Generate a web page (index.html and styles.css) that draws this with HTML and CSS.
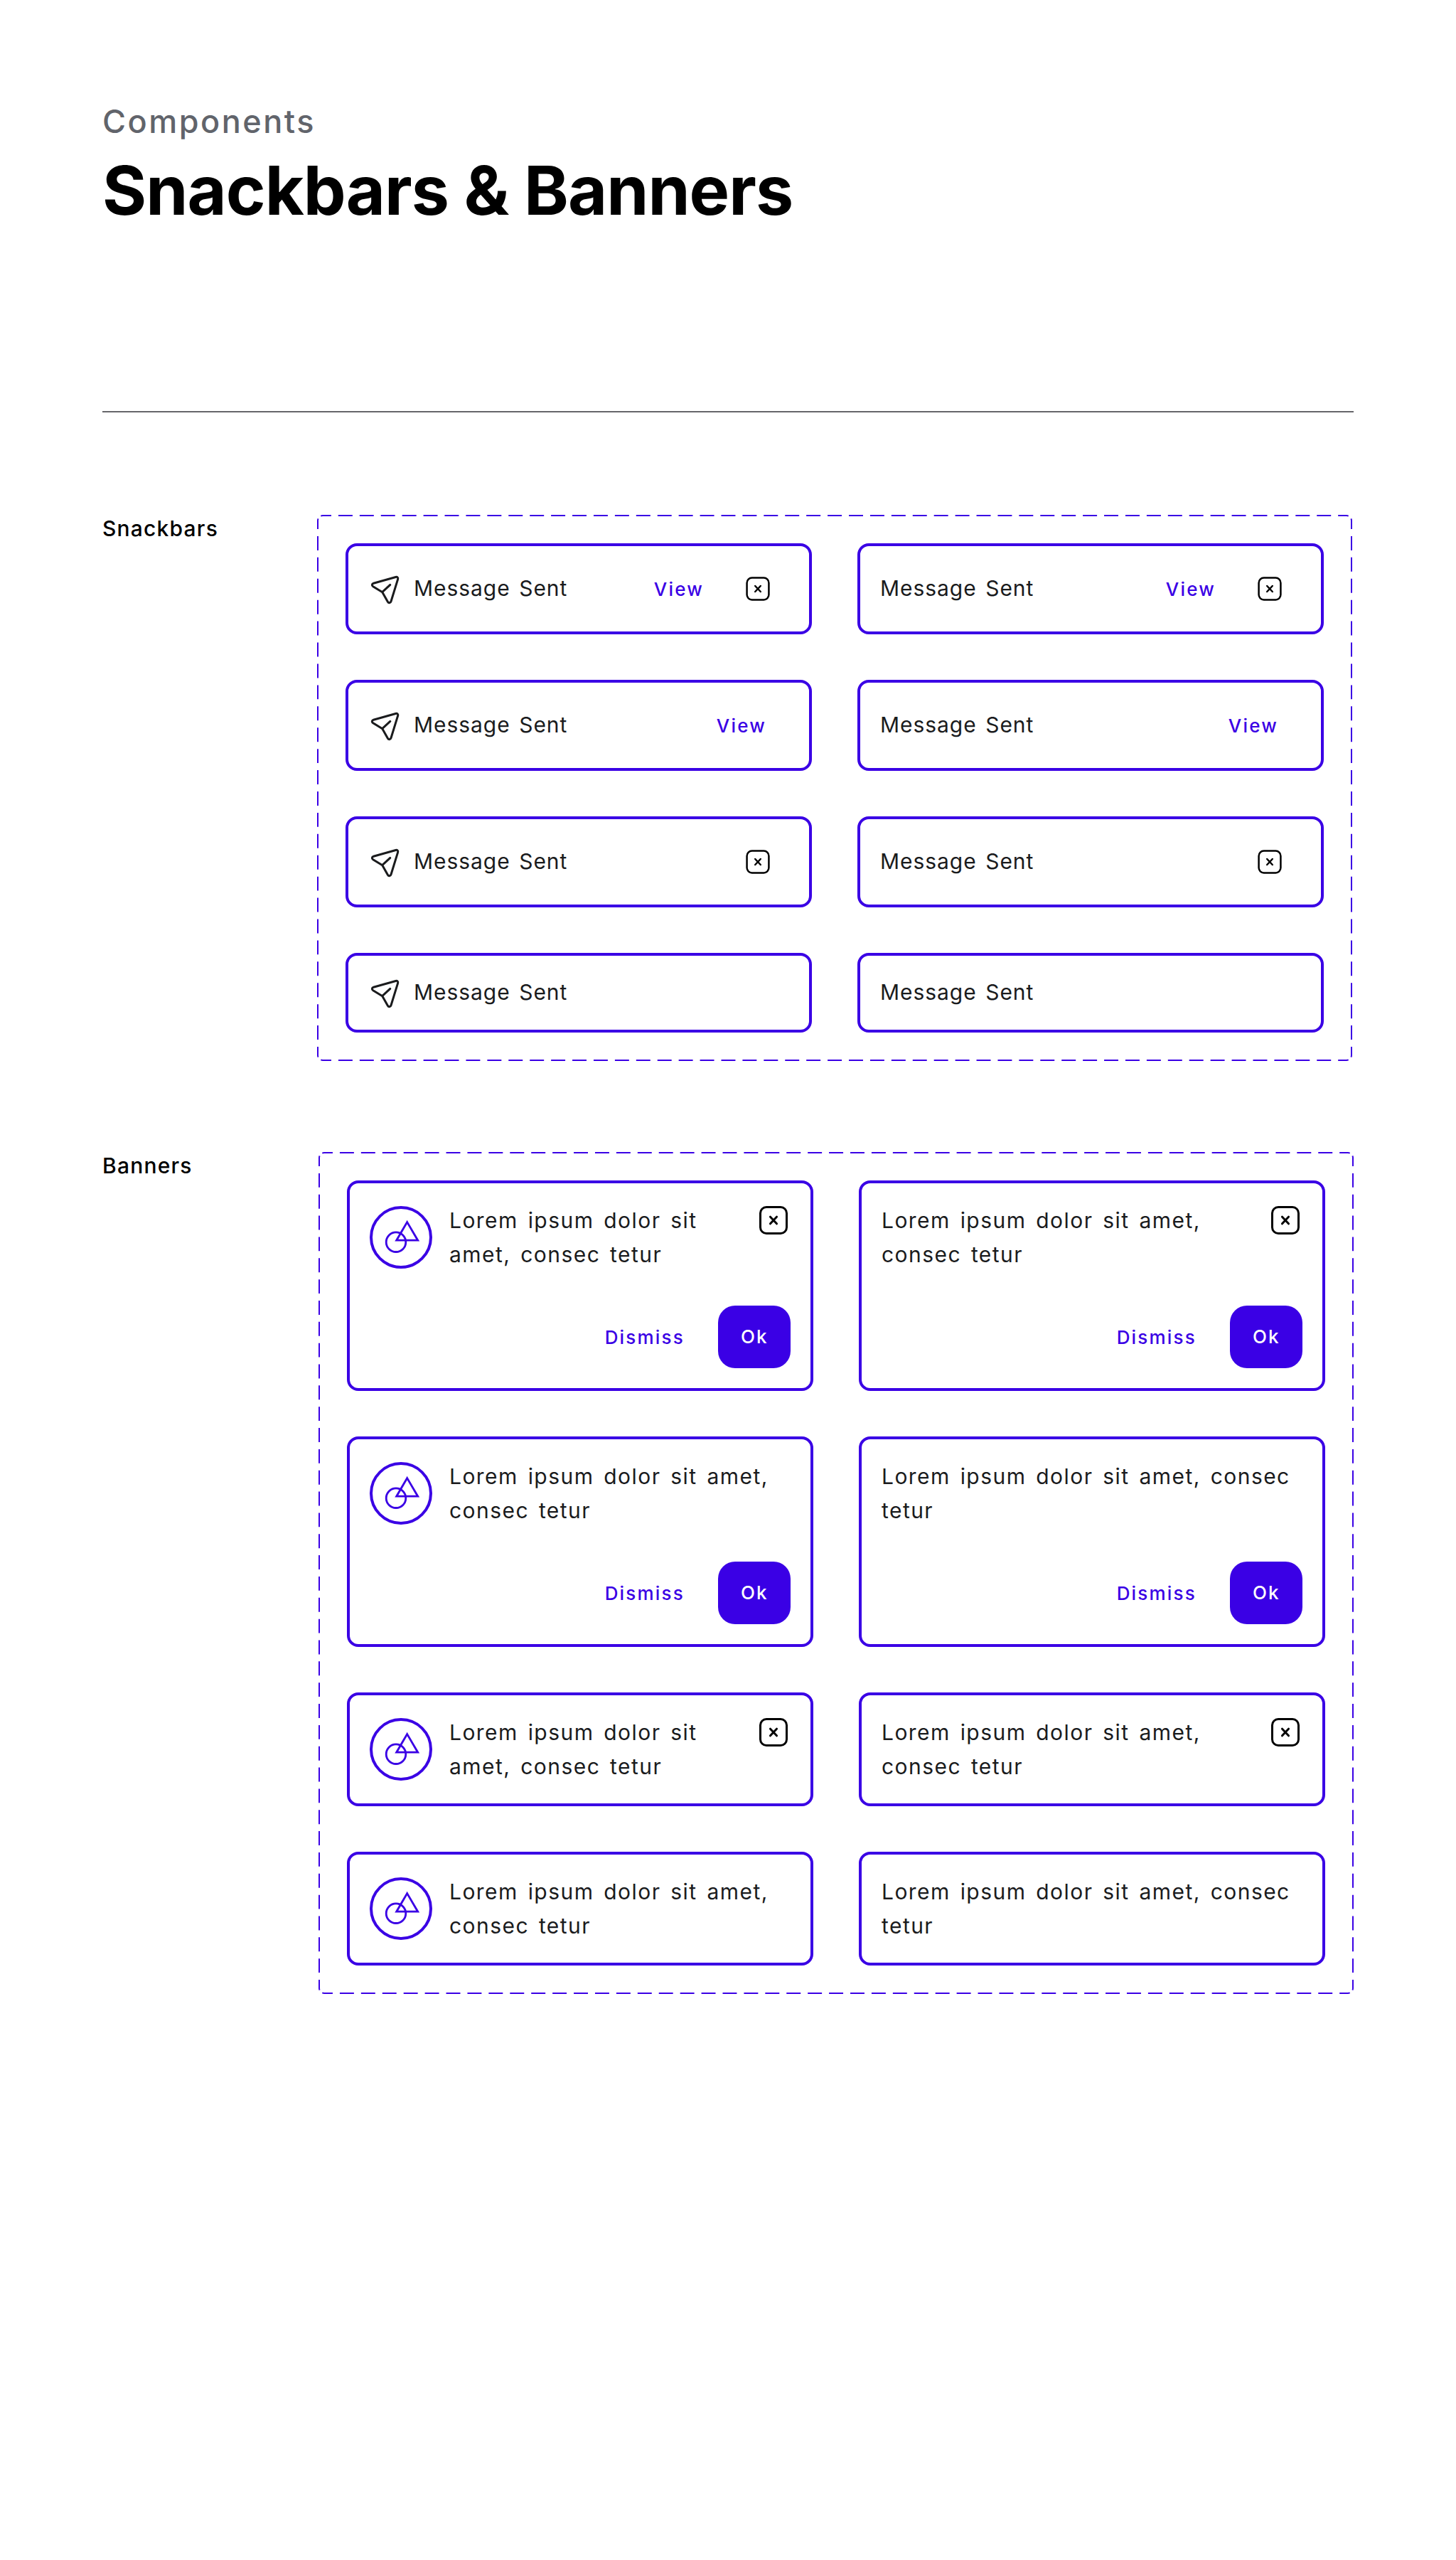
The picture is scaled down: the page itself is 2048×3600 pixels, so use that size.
FILE: index.html
```html
<!DOCTYPE html>
<html lang="en">
<head>
<meta charset="utf-8">
<title>Snackbars &amp; Banners</title>
<link rel="stylesheet" href="styles.css">
</head>
<body>
<svg class="sprite" aria-hidden="true">
  <symbol id="send" viewBox="0 0 48 48">
    <path d="M38.6 7.5L7.4 16.2C5 16.9 4.6 19.4 6.7 20.7L19 28.2C19.6 28.6 19.9 28.9 20.2 29.4L27.4 42.3C28.6 44.4 31.3 44.1 32 41.8L41.6 10.6C42.3 8.4 40.8 6.9 38.6 7.5ZM19.7 28.7L30.8 18.4"/>
  </symbol>
  <symbol id="close" viewBox="0 0 48 48">
    <rect x="5.5" y="5.5" width="37" height="37" rx="8.5"/>
    <path d="M19.5 19.2L28.5 28.8M28.5 19.2L19.5 28.8"/>
  </symbol>
  <symbol id="shapes" viewBox="0 0 88 88">
    <circle cx="44" cy="44" r="42" stroke-width="4"/>
    <circle cx="37" cy="50.7" r="13.8"/>
    <path d="M52.7 22.6L67.7 48.2H37.7Z"/>
  </symbol>
</svg>
<main class="page">
  <header class="header">
    <p class="eyebrow">Components</p>
    <h1 class="title">Snackbars &amp; Banners</h1>
  </header>

  <section class="section">
    <h2 class="label">Snackbars</h2>
    <div class="panel">
      <svg class="frame" viewBox="0 0 1456 768">
        <g stroke-dasharray="19.95 9.97" stroke-dashoffset="5.2">
          <path d="M5.27 1.55Q6.6 1 8 1H1448Q1449.4 1 1450.73 1.55"/>
          <path d="M5.27 766.45Q6.6 767 8 767H1448Q1449.4 767 1450.73 766.45"/>
          <path d="M1.55 5.27Q1 6.6 1 8V760Q1 761.4 1.55 762.73"/>
          <path d="M1454.45 5.27Q1455 6.6 1455 8V760Q1455 761.4 1454.45 762.73"/>
        </g>
      </svg>
      <div class="card snackbar">
        <svg class="send"><use href="#send"/></svg>
        <span class="message">Message Sent</span>
        <a class="link">View</a>
        <span class="close-button"><svg class="close-small"><use href="#close"/></svg></span>
      </div>
      <div class="card snackbar">
        <span class="message">Message Sent</span>
        <a class="link">View</a>
        <span class="close-button"><svg class="close-small"><use href="#close"/></svg></span>
      </div>
      <div class="card snackbar">
        <svg class="send"><use href="#send"/></svg>
        <span class="message">Message Sent</span>
        <a class="link">View</a>
      </div>
      <div class="card snackbar">
        <span class="message">Message Sent</span>
        <a class="link">View</a>
      </div>
      <div class="card snackbar">
        <svg class="send"><use href="#send"/></svg>
        <span class="message">Message Sent</span>
        <span class="close-button"><svg class="close-small"><use href="#close"/></svg></span>
      </div>
      <div class="card snackbar">
        <span class="message">Message Sent</span>
        <span class="close-button"><svg class="close-small"><use href="#close"/></svg></span>
      </div>
      <div class="card snackbar plain">
        <svg class="send"><use href="#send"/></svg>
        <span class="message">Message Sent</span>
      </div>
      <div class="card snackbar plain">
        <span class="message">Message Sent</span>
      </div>
    </div>
  </section>

  <section class="section banners">
    <h2 class="label">Banners</h2>
    <div class="panel">
      <svg class="frame" viewBox="0 0 1456 1184">
        <g stroke-dasharray="19.95 9.97" stroke-dashoffset="5.2">
          <path d="M5.27 1.55Q6.6 1 8 1H1448Q1449.4 1 1450.73 1.55"/>
          <path d="M5.27 1182.45Q6.6 1183 8 1183H1448Q1449.4 1183 1450.73 1182.45"/>
        </g>
        <g stroke-dasharray="19.9 9.945" stroke-dashoffset="5.15">
          <path d="M1.55 5.27Q1 6.6 1 8V1176Q1 1177.4 1.55 1178.73"/>
          <path d="M1454.45 5.27Q1455 6.6 1455 8V1176Q1455 1177.4 1454.45 1178.73"/>
        </g>
      </svg>
      <div class="card banner">
        <div class="body">
          <svg class="shapes"><use href="#shapes"/></svg>
          <p class="text">Lorem ipsum dolor sit amet, consec tetur</p>
          <svg class="close"><use href="#close"/></svg>
        </div>
        <div class="actions"><a class="link">Dismiss</a><span class="button">Ok</span></div>
      </div>
      <div class="card banner">
        <div class="body">
          <p class="text">Lorem ipsum dolor sit amet, consec tetur</p>
          <svg class="close"><use href="#close"/></svg>
        </div>
        <div class="actions"><a class="link">Dismiss</a><span class="button">Ok</span></div>
      </div>
      <div class="card banner">
        <div class="body">
          <svg class="shapes"><use href="#shapes"/></svg>
          <p class="text">Lorem ipsum dolor sit amet, consec tetur</p>
        </div>
        <div class="actions"><a class="link">Dismiss</a><span class="button">Ok</span></div>
      </div>
      <div class="card banner">
        <div class="body">
          <p class="text">Lorem ipsum dolor sit amet, consec tetur</p>
        </div>
        <div class="actions"><a class="link">Dismiss</a><span class="button">Ok</span></div>
      </div>
      <div class="card banner">
        <div class="body">
          <svg class="shapes"><use href="#shapes"/></svg>
          <p class="text">Lorem ipsum dolor sit amet, consec tetur</p>
          <svg class="close"><use href="#close"/></svg>
        </div>
      </div>
      <div class="card banner">
        <div class="body">
          <p class="text">Lorem ipsum dolor sit amet, consec tetur</p>
          <svg class="close"><use href="#close"/></svg>
        </div>
      </div>
      <div class="card banner">
        <div class="body">
          <svg class="shapes"><use href="#shapes"/></svg>
          <p class="text">Lorem ipsum dolor sit amet, consec tetur</p>
        </div>
      </div>
      <div class="card banner">
        <div class="body">
          <p class="text">Lorem ipsum dolor sit amet, consec tetur</p>
        </div>
      </div>
    </div>
  </section>
</main>
</body>
</html>
```
FILE: styles.css
```css
:root {
  --primary: #3a00e5;
  --ink: #1a1b1d;
}

* {
  box-sizing: border-box;
  margin: 0;
}

body {
  background: #fff;
  color: #000;
  font-family: Inter, "Liberation Sans", sans-serif;
}

svg {
  flex: none;
  fill: none;
}

.sprite {
  display: none;
}

.page {
  min-height: 3600px;
  padding: 144px 144px 0;
}

/* Page heading */
.header {
  height: 436px;
  border-bottom: 2px solid #66666a;
}

.eyebrow {
  color: #61646b;
  font-size: 45px;
  font-weight: 500;
  line-height: 54px;
  letter-spacing: 2.5px;
}

.title {
  margin-top: 14px;
  font-size: 95px;
  font-weight: 700;
  line-height: 112px;
  letter-spacing: -0.93px;
}

/* Sections */
.section {
  display: grid;
  grid-template-columns: 302px 1456px;
  margin-top: 144px;
}

.section.banners {
  grid-template-columns: 304px 1456px;
  margin-top: 128px;
}

.label {
  font-size: 30px;
  font-weight: 500;
  line-height: 38px;
  letter-spacing: 1.2px;
}

.panel {
  position: relative;
  display: grid;
  grid-template-columns: 656px 656px;
  gap: 64px;
  padding: 40px;
}

.frame {
  position: absolute;
  inset: 0;
  width: 100%;
  height: 100%;
  stroke: var(--primary);
  stroke-width: 2;
}

.card {
  border: 4px solid var(--primary);
  border-radius: 16px;
  color: var(--ink);
  font-size: 30px;
}

.link {
  padding: 0 32px;
  color: var(--primary);
  font-size: 26px;
  font-weight: 500;
  letter-spacing: 2.2px;
}

/* Snackbars */
.snackbar {
  display: flex;
  align-items: center;
  height: 128px;
  padding: 0 28px;
}

.snackbar.plain {
  height: 112px;
}

.send {
  width: 48px;
  height: 48px;
  margin-right: 16px;
  stroke: var(--ink);
  stroke-width: 3;
  stroke-linecap: round;
  stroke-linejoin: round;
}

.message {
  flex: 1;
  padding-bottom: 2px;
  letter-spacing: 0.95px;
  word-spacing: 3.2px;
}

.close-button {
  display: flex;
  padding: 0 24px;
}

.close-small,
.close {
  width: 40px;
  height: 40px;
  stroke: #000;
  stroke-width: 3;
  stroke-linecap: round;
}

/* Banners */
.banner {
  padding: 28px;
}

.body {
  display: flex;
}

.shapes {
  width: 88px;
  height: 88px;
  margin: 4px 24px 0 0;
  stroke: var(--primary);
  stroke-width: 2.8;
}

.text {
  flex: 1;
  line-height: 48px;
  letter-spacing: 1.45px;
  word-spacing: 4px;
}

.close {
  width: 48px;
  height: 48px;
}

.actions {
  display: flex;
  justify-content: flex-end;
  align-items: center;
  gap: 15px;
  margin-top: 48px;
}

.button {
  width: 102px;
  height: 88px;
  padding-left: 32px;
  border-radius: 24px;
  background: var(--primary);
  color: #fff;
  font-size: 26px;
  font-weight: 500;
  line-height: 88px;
  letter-spacing: 2px;
}
```
